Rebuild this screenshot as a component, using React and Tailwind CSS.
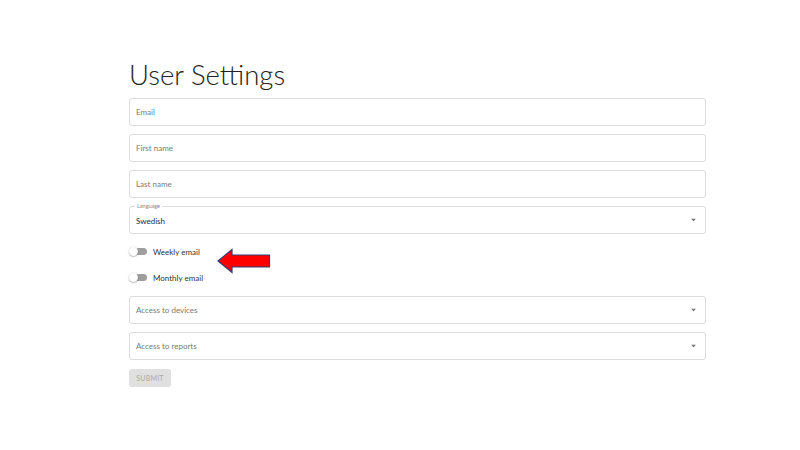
import React from "react";

const font = { fontFamily: "Lato, 'Noto Sans', sans-serif" };

function Caret() {
  return (
    <svg width="5" height="3" viewBox="0 0 5 3" className="absolute right-[9px] top-1/2 -translate-y-1/2">
      <path d="M0 0 L5 0 L2.5 3 Z" fill="#757575" />
    </svg>
  );
}

function Field({ label, select }) {
  return (
    <div className="relative h-[28px] rounded-[3px] border border-[#dcdcdc] flex items-center pl-[6px]">
      <span className="text-[8px] text-[#7a7a7a]">{label}</span>
      {select && <Caret />}
    </div>
  );
}

function Toggle({ label }) {
  return (
    <div className="flex items-center h-[26px]">
      <div className="relative w-[18px] h-[10px]">
        <div className="absolute left-[5px] top-[1px] w-[13px] h-[7px] rounded-full bg-[#9e9e9e]" />
        <div className="absolute left-0 top-[-0.5px] w-[9px] h-[9px] rounded-full bg-white shadow-[0_0.5px_1.5px_rgba(0,0,0,0.45)]" />
      </div>
      <span className="ml-[6px] text-[8px] text-[#333]">{label}</span>
    </div>
  );
}

export default function App() {
  return (
    <div className="w-[800px] h-[450px] bg-white" style={font}>
      <div className="ml-[129px] w-[577px] pt-[57px]">
        <h1 className="text-[27.5px] font-light text-[#222] leading-[36px]">User Settings</h1>
        <div className="mt-[5px] flex flex-col gap-[8px]">
          <Field label="Email" />
          <Field label="First name" />
          <Field label="Last name" />
          <div className="relative h-[28px] rounded-[3px] border border-[#dcdcdc] flex items-center pl-[6px]">
            <span className="absolute left-[5px] top-[-5px] px-[2px] bg-white text-[5.5px] text-[#888] leading-[8px]">Language</span>
            <span className="text-[8px] text-[#1f2a44] mt-[2px]">Swedish</span>
            <Caret />
          </div>
        </div>
        <div className="mt-[5px] flex flex-col relative">
          <Toggle label="Weekly email" />
          <Toggle label="Monthly email" />
          <svg className="absolute left-[88px] top-[9px]" width="55" height="26" viewBox="0 0 55 26">
            <path d="M1 13 L15 1.5 L15 7 L52.5 7 L52.5 19 L15 19 L15 24.5 Z" fill="#ff0000" stroke="#2f3f7a" strokeWidth="1.2" strokeLinejoin="miter" />
          </svg>
        </div>
        <div className="mt-[5px] flex flex-col gap-[8px]">
          <Field label="Access to devices" select />
          <Field label="Access to reports" select />
        </div>
        <div className="mt-[9px] w-[42px] h-[18px] rounded-[3px] bg-[#e0e0e0] flex items-center justify-center">
          <span className="text-[7px] text-[#a8a8a8] tracking-[0.2px]">SUBMIT</span>
        </div>
      </div>
    </div>
  );
}
